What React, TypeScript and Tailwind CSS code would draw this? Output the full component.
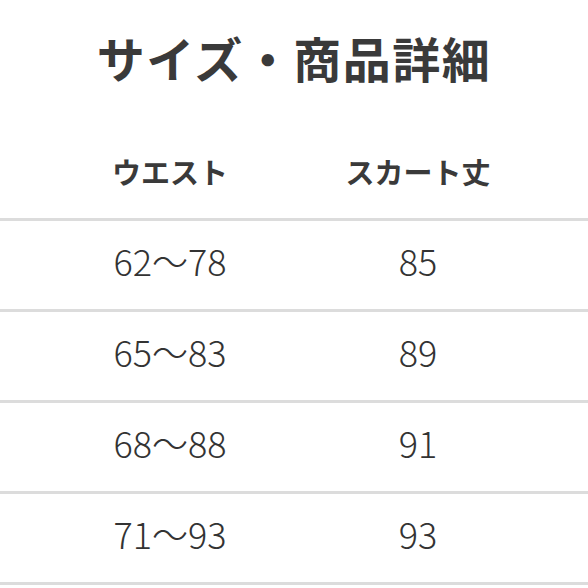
const rows = [
  ['62〜78', '85'],
  ['65〜83', '89'],
  ['68〜88', '91'],
  ['71〜93', '93'],
]

export default function App() {
  return (
    <div
      className="w-[588px] h-[588px] bg-white overflow-hidden text-[#333]"
      style={{ fontFamily: '"Noto Sans CJK JP", "Noto Sans", sans-serif' }}
    >
      {/* Title */}
      <div className="h-[124px] flex items-center justify-center pb-[10px]">
        <h1 className="text-[48px] font-bold tracking-[1.5px] text-[#3a3a3a]">サイズ・商品詳細</h1>
      </div>

      {/* Header */}
      <div className="h-[94px] px-[46px] grid grid-cols-2 items-center pt-[2px]">
        <div className="text-center text-[29px] font-bold text-[#3a3a3a]">ウエスト</div>
        <div className="text-center text-[29px] font-bold text-[#3a3a3a]">スカート丈</div>
      </div>

      {/* Rows */}
      {rows.map(([waist, length]) => (
        <div
          key={waist}
          className="h-[91px] border-t-[3px] border-[#dcdcdc] px-[46px] grid grid-cols-2 items-center pb-[10px]"
        >
          <div className="text-center text-[36px] font-extralight">{waist}</div>
          <div className="text-center text-[36px] font-extralight">{length}</div>
        </div>
      ))}
      <div className="border-t-[3px] border-[#dcdcdc]" />
    </div>
  )
}
